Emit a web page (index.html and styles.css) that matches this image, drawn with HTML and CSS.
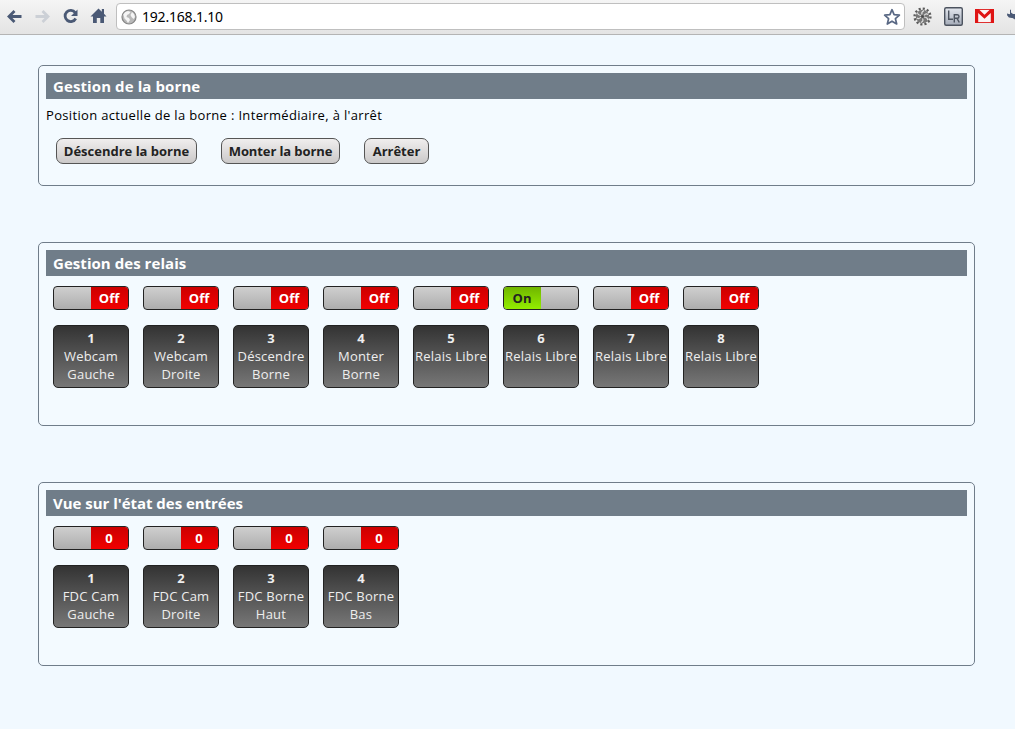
FILE: index.html
```html
<!DOCTYPE html>
<html lang="fr">
<head>
<meta charset="utf-8">
<title>192.168.1.10</title>
<link rel="stylesheet" href="styles.css">
</head>
<body>
<header class="toolbar">
  <svg class="nav-icons" width="116" height="34" viewBox="0 0 116 34">
    <g fill="none" stroke="#4a5975" stroke-width="2.8">
      <path d="M21.5 16.5H9.5M14.5 11L9 16.5L14.5 22"/>
      <path stroke="#ccd0d6" d="M35.500 16.500H47.500M42.500 11L48 16.500L42.500 22"/>
      <path d="M75.200 12.600A5.600 5.600 0 1 0 75.700 18.500"/>
    </g>
    <path fill="#4a5975" d="M77.500 9.500V16H71zM90.500 16.500L98.500 8.500L101.800 11.700V9H104V13.800L106.500 16.500H104V23H100.300V18H96.800V23H93V16.500z"/>
  </svg>
  <div class="address">
    <svg width="16" height="16" viewBox="0 0 16 16">
      <circle cx="8" cy="8" r="7" fill="#b9b9b9" stroke="#858585" stroke-width="1.200"/>
      <path fill="#f5f5f5" d="M2.300 5.200Q4 2.300 7 2L9.500 3L8 5L6 6L5.500 8L8 9L9 11L7 14L5.500 11.500L3.500 9.500zM11 3L13 5L14 8L12.500 10L10.500 8L9.500 6z"/>
    </svg>
    <span class="url">192.168.1.10</span>
    <svg class="star" width="18" height="18" viewBox="0 0 18 18">
      <path fill="#fff" stroke="#596884" stroke-width="1.700" stroke-linejoin="round" d="M9 1.700L11.100 6.700L16.400 7.200L12.400 10.700L13.700 16L9 13.200L4.300 16L5.600 10.700L1.600 7.200L6.900 6.700z"/>
    </svg>
  </div>
  <svg class="extensions" width="110" height="34" viewBox="905 0 110 34">
    <circle cx="922.500" cy="16.500" r="7.900" fill="none" stroke="#5c5c5c" stroke-width="2.400" stroke-dasharray="2.100 2.036"/>
    <circle cx="922.500" cy="16.500" r="6.700" fill="#777"/>
    <path fill="none" stroke="#e2e2e2" stroke-width="1.100" d="M921 15.500Q917.500 15 917.500 12.500M922 14.500Q921 12 924 10.500M924 15.500Q926 13 928 14.500M924 17Q928 17.500 927.500 20M922.500 18.500Q924 21 921 22.500M921 17Q919 19.500 917 18"/>
    <circle cx="922.500" cy="16.500" r="1.300" fill="#484848"/>
    <defs><linearGradient id="lr" x2="0" y2="1"><stop stop-color="#e3e7ee"/><stop offset="1" stop-color="#a4abb8"/></linearGradient></defs>
    <rect x="944.700" y="7.700" width="17.600" height="17.600" rx="1.500" fill="url(#lr)" stroke="#4c535f" stroke-width="1.400"/>
    <path fill="none" stroke="#4c535f" stroke-width="1.400" d="M948.700 10.500V19.300H953M954.300 22.500V14.700H957.300Q959 14.700 959 16.500Q959 18.300 957.300 18.300H954.500M957 18.300L959.300 22.500"/>
    <rect x="975.500" y="9.500" width="18" height="13" fill="#fbf5f5" stroke="#df3030" stroke-width="1"/>
    <path fill="#df1515" d="M975 9H978.500L984.500 14.800L990.500 9H994V23H990.800V13L984.500 18.800L978.200 13V23H975z"/>
    <path fill="#4a5975" d="M1011 9.500V12.500L1013 14H1015V19.500L1012.500 18Q1008.500 18.300 1007.200 15.500L1007 13.500L1010 14.200V10z"/>
  </svg>
</header>
<main>
  <section class="panel panel-command">
    <h2><span class="t1">Gestion de la borne</span></h2>
    <p class="status">Position actuelle de la borne : Intermédiaire, à l'arrêt</p>
    <div class="actions">
      <button class="b1">Déscendre la borne</button>
      <button class="b2">Monter la borne</button>
      <button class="b3">Arrêter</button>
    </div>
  </section>
  <section class="panel">
    <h2><span class="t2">Gestion des relais</span></h2>
    <div class="channels">
      <div class="channel"><div class="switch"><b>Off</b></div><div class="label"><b>1</b>Webcam<br>Gauche</div></div>
      <div class="channel"><div class="switch"><b>Off</b></div><div class="label"><b>2</b>Webcam<br>Droite</div></div>
      <div class="channel"><div class="switch"><b>Off</b></div><div class="label"><b>3</b>Déscendre<br>Borne</div></div>
      <div class="channel"><div class="switch"><b>Off</b></div><div class="label"><b>4</b>Monter<br>Borne</div></div>
      <div class="channel"><div class="switch"><b>Off</b></div><div class="label"><b>5</b>Relais Libre</div></div>
      <div class="channel"><div class="switch on"><b>On</b></div><div class="label"><b>6</b>Relais Libre</div></div>
      <div class="channel"><div class="switch"><b>Off</b></div><div class="label"><b>7</b>Relais Libre</div></div>
      <div class="channel"><div class="switch"><b>Off</b></div><div class="label"><b>8</b>Relais Libre</div></div>
    </div>
  </section>
  <section class="panel">
    <h2><span class="t3">Vue sur l'état des entrées</span></h2>
    <div class="channels">
      <div class="channel"><div class="switch"><b>0</b></div><div class="label"><b>1</b>FDC Cam<br>Gauche</div></div>
      <div class="channel"><div class="switch"><b>0</b></div><div class="label"><b>2</b>FDC Cam<br>Droite</div></div>
      <div class="channel"><div class="switch"><b>0</b></div><div class="label"><b>3</b>FDC Borne<br>Haut</div></div>
      <div class="channel"><div class="switch"><b>0</b></div><div class="label"><b>4</b>FDC Borne<br>Bas</div></div>
    </div>
  </section>
</main>
</body>
</html>
```
FILE: styles.css
```css
* { box-sizing: border-box; }
body {
  margin: 0;
  height: 729px;
  overflow: hidden;
  background: #f1f9ff;
  font-family: "Trebuchet MS", "Open Sans", sans-serif;
  font-size: 13px;
  color: #000;
}
.toolbar {
  display: flex;
  height: 35px;
  background: linear-gradient(#f5f5f5, #e4e4e4);
  border-bottom: 1px solid #b4b4b4;
}
.toolbar svg { flex: none; }
.address {
  display: flex;
  align-items: center;
  width: 789px;
  height: 27px;
  margin-top: 3px;
  padding: 0 3px 0 4px;
  background: #fff;
  border: 1px solid #bfbfbf;
  border-radius: 4px;
}
.url {
  margin-left: 5px;
  font: 14px/24px "Noto Sans", sans-serif;
  letter-spacing: -0.2px;
}
.star { margin-left: auto; }
main {
  display: flex;
  flex-direction: column;
  gap: 56px;
  padding: 30px 40px 0 38px;
}
.panel {
  height: 184px;
  padding: 7px;
  border: 1px solid #707d8a;
  border-radius: 5px;
  background: #f3faff;
}
.panel-command { height: 121px; }
h2 {
  margin: 0;
  height: 26px;
  padding-left: 7px;
  background: #707d89;
  color: #fff;
  font-size: 15px;
  line-height: 27px;
}
.t1 { letter-spacing: 0.1px; }
.t2 { letter-spacing: 0.05px; }
.t3 { letter-spacing: -0.03px; }
.status {
  margin: 7px 0 0;
  line-height: 19px;
  letter-spacing: 0.33px;
  white-space: nowrap;
}
.actions { display: flex; gap: 24px; padding: 13px 10px 0; }
button {
  height: 26px;
  padding: 0;
  border: 1px solid #555;
  border-radius: 7px;
  background: linear-gradient(#f0eeee, #cbc9c9);
  color: #222;
  font: bold 13px/24px "Trebuchet MS", "Open Sans", sans-serif;
  white-space: nowrap;
}
.b1 { width: 141px; }
.b2 { width: 119px; letter-spacing: -0.1px; }
.b3 { width: 65px; }
.channels { display: flex; gap: 14px; padding: 10px 7px 0; }
.channel { width: 76px; }
.switch {
  display: flex;
  justify-content: flex-end;
  height: 24px;
  border: 1px solid #222;
  border-radius: 4px;
  overflow: hidden;
  background: linear-gradient(#cfcfcf, #adadad);
}
.switch b {
  width: 37px;
  padding-right: 1px;
  background: linear-gradient(#cc0000, #f20000);
  color: #fff;
  line-height: 22px;
  text-align: center;
}
.switch.on { justify-content: flex-start; }
.switch.on b { background: linear-gradient(#70b500, #93ee00); color: #222; }
.label {
  height: 63px;
  margin-top: 15px;
  padding-top: 3px;
  border: 1px solid #222;
  border-radius: 5px;
  background: linear-gradient(#333, #777);
  color: #eee;
  line-height: 18px;
  letter-spacing: 0.22px;
  text-align: center;
  white-space: nowrap;
}
.label b { display: block; }
```
